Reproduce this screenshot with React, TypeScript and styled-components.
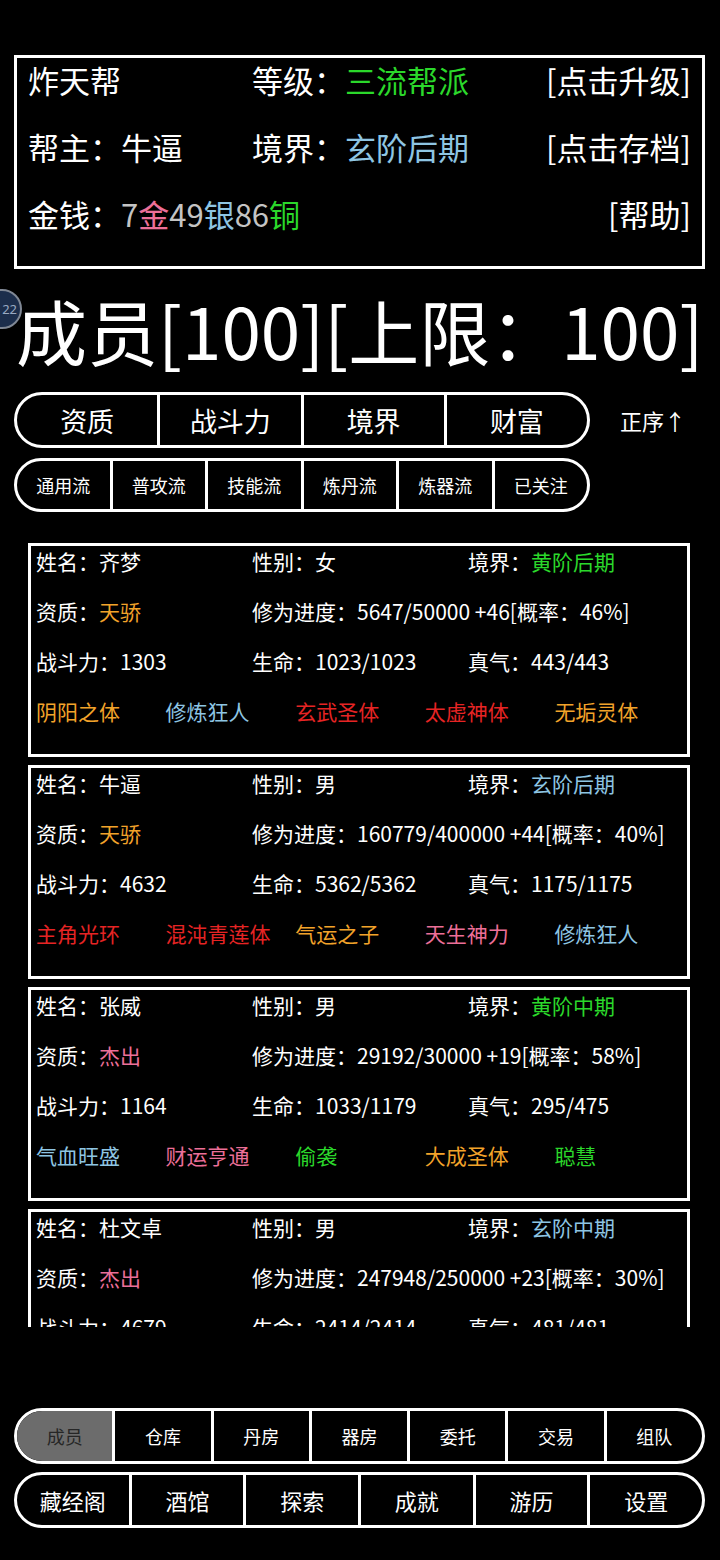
import React from 'react';
import styled, { createGlobalStyle } from 'styled-components';

const C = {
  white: '#ffffff',
  green: '#2bd82b',
  blue: '#8ec5e3',
  orange: '#f2a32a',
  red: '#e62424',
  pink: '#ec6f98',
  grey: '#c4c4c4',
};

const Global = createGlobalStyle`
  html, body { margin: 0; padding: 0; background: #000; }
  body {
    font-family: "Noto Sans CJK SC", "Noto Sans", sans-serif;
    color: #fff;
  }
  * { box-sizing: border-box; }
`;

const Page = styled.div`
  position: relative;
  width: 720px;
  height: 1560px;
  overflow: hidden;
  background: #000;
  padding: 55px 15px 0 14px;
  display: flex;
  flex-direction: column;
`;

const Panel = styled.div`
  border: 3px solid #fff;
  padding: 2px 11px 32px 11px;
  display: flex;
  flex-direction: column;
  gap: 27px;
  font-size: 31px;
`;

const PanelRow = styled.div`
  display: grid;
  grid-template-columns: 224px 1fr auto;
  height: 40px;
  line-height: 40px;
  align-items: center;
  white-space: nowrap;
`;

const Tint = styled.span<{ $c: string }>`
  color: ${(p) => p.$c};
`;

const Heading = styled.div`
  font-size: 71px;
  line-height: 80px;
  margin: 20px 0 23px 2px;
  white-space: nowrap;
`;

const Bubble = styled.div`
  position: absolute;
  left: -18px;
  top: 289px;
  width: 40px;
  height: 40px;
  border-radius: 50%;
  background: #1c2e4c;
  border: 2px solid #7f8794;
  color: #9aaac2;
  font-size: 13px;
  display: flex;
  align-items: center;
  justify-content: flex-end;
  padding-right: 3px;
  font-family: "Noto Sans", sans-serif;
`;

const SortLine = styled.div<{ $top?: number }>`
  display: flex;
  align-items: center;
  margin-top: ${(p) => p.$top ?? 0}px;
`;

const Pill = styled.div<{ $h: number; $w: number }>`
  display: flex;
  width: ${(p) => p.$w}px;
  height: ${(p) => p.$h}px;
  border: 3px solid #fff;
  border-radius: 999px;
  overflow: hidden;
`;

const PillCell = styled.div<{ $size: number; $active?: boolean }>`
  flex: 1;
  display: flex;
  align-items: center;
  justify-content: center;
  font-size: ${(p) => p.$size}px;
  white-space: nowrap;
  background: ${(p) => (p.$active ? '#6c6c6c' : 'transparent')};
  color: ${(p) => (p.$active ? '#262626' : '#fff')};
  & + & {
    border-left: 3px solid #fff;
  }
`;

const Order = styled.div`
  margin-left: 30px;
  font-size: 22px;
`;

const List = styled.div`
  margin: 31px 0 0 14px;
  width: 662px;
  height: 784px;
  overflow: hidden;
  display: flex;
  flex-direction: column;
  gap: 8px;
`;

const Card = styled.div`
  flex: 0 0 214px;
  height: 214px;
  border: 3px solid #fff;
  padding: 0 0 0 5px;
  display: flex;
  flex-direction: column;
  gap: 20px;
  font-size: 21px;
`;

const InfoRow = styled.div`
  display: grid;
  grid-template-columns: repeat(3, 216px);
  height: 30px;
  line-height: 30px;
  white-space: nowrap;
`;

const Wide = styled.div`
  grid-column: span 2;
`;

const TraitRow = styled.div`
  display: grid;
  grid-template-columns: repeat(5, 129.6px);
  height: 30px;
  line-height: 30px;
  white-space: nowrap;
`;

const Nav = styled.div`
  margin-top: 81px;
  display: flex;
  flex-direction: column;
  gap: 8px;
`;

type Member = {
  name: string;
  sex: string;
  realm: string;
  realmC: string;
  apt: string;
  aptC: string;
  prog: string;
  power: string;
  life: string;
  qi: string;
  traits: [string, string][];
};

const members: Member[] = [
  {
    name: '齐梦', sex: '女', realm: '黄阶后期', realmC: C.green, apt: '天骄', aptC: C.orange,
    prog: '5647/50000 +46[概率：46%]', power: '1303', life: '1023/1023', qi: '443/443',
    traits: [['阴阳之体', C.orange], ['修炼狂人', C.blue], ['玄武圣体', C.red], ['太虚神体', C.red], ['无垢灵体', C.orange]],
  },
  {
    name: '牛逼', sex: '男', realm: '玄阶后期', realmC: C.blue, apt: '天骄', aptC: C.orange,
    prog: '160779/400000 +44[概率：40%]', power: '4632', life: '5362/5362', qi: '1175/1175',
    traits: [['主角光环', C.red], ['混沌青莲体', C.red], ['气运之子', C.orange], ['天生神力', C.pink], ['修炼狂人', C.blue]],
  },
  {
    name: '张威', sex: '男', realm: '黄阶中期', realmC: C.green, apt: '杰出', aptC: C.pink,
    prog: '29192/30000 +19[概率：58%]', power: '1164', life: '1033/1179', qi: '295/475',
    traits: [['气血旺盛', C.blue], ['财运亨通', C.pink], ['偷袭', C.green], ['大成圣体', C.orange], ['聪慧', C.green]],
  },
  {
    name: '杜文卓', sex: '男', realm: '玄阶中期', realmC: C.blue, apt: '杰出', aptC: C.pink,
    prog: '247948/250000 +23[概率：30%]', power: '4679', life: '2414/2414', qi: '481/481',
    traits: [['铁骨', C.blue], ['聪慧', C.green], ['偷袭', C.green], ['天生神力', C.pink], ['修炼狂人', C.blue]],
  },
];

const navTop = ['成员', '仓库', '丹房', '器房', '委托', '交易', '组队'];
const navBottom = ['藏经阁', '酒馆', '探索', '成就', '游历', '设置'];

export default function App() {
  return (
    <>
      <Global />
      <Page>
        <Panel>
          <PanelRow>
            <span>炸天帮</span>
            <span>等级：<Tint $c={C.green}>三流帮派</Tint></span>
            <span>[点击升级]</span>
          </PanelRow>
          <PanelRow>
            <span>帮主：牛逼</span>
            <span>境界：<Tint $c={C.blue}>玄阶后期</Tint></span>
            <span>[点击存档]</span>
          </PanelRow>
          <PanelRow>
            <span>
              金钱：<Tint $c={C.grey}>7</Tint><Tint $c={C.pink}>金</Tint>
              <Tint $c={C.grey}>49</Tint><Tint $c={C.blue}>银</Tint>
              <Tint $c={C.grey}>86</Tint><Tint $c={C.green}>铜</Tint>
            </span>
            <span />
            <span>[帮助]</span>
          </PanelRow>
        </Panel>

        <Heading>成员[100][上限：100]</Heading>

        <SortLine>
          <Pill $h={56} $w={576}>
            {['资质', '战斗力', '境界', '财富'].map((t) => (
              <PillCell key={t} $size={27}>{t}</PillCell>
            ))}
          </Pill>
          <Order>正序↑</Order>
        </SortLine>
        <SortLine $top={10}>
          <Pill $h={54} $w={576}>
            {['通用流', '普攻流', '技能流', '炼丹流', '炼器流', '已关注'].map((t) => (
              <PillCell key={t} $size={18}>{t}</PillCell>
            ))}
          </Pill>
        </SortLine>

        <List>
          {members.map((m) => (
            <Card key={m.name}>
              <InfoRow>
                <span>姓名：{m.name}</span>
                <span>性别：{m.sex}</span>
                <span>境界：<Tint $c={m.realmC}>{m.realm}</Tint></span>
              </InfoRow>
              <InfoRow>
                <span>资质：<Tint $c={m.aptC}>{m.apt}</Tint></span>
                <Wide>修为进度：{m.prog}</Wide>
              </InfoRow>
              <InfoRow>
                <span>战斗力：{m.power}</span>
                <span>生命：{m.life}</span>
                <span>真气：{m.qi}</span>
              </InfoRow>
              <TraitRow>
                {m.traits.map(([t, c], i) => (
                  <Tint key={i} $c={c}>{t}</Tint>
                ))}
              </TraitRow>
            </Card>
          ))}
        </List>

        <Nav>
          <Pill $h={56} $w={691}>
            {navTop.map((t, i) => (
              <PillCell key={t} $size={18} $active={i === 0}>{t}</PillCell>
            ))}
          </Pill>
          <Pill $h={56} $w={691}>
            {navBottom.map((t) => (
              <PillCell key={t} $size={22}>{t}</PillCell>
            ))}
          </Pill>
        </Nav>

        <Bubble>22</Bubble>
      </Page>
    </>
  );
}
